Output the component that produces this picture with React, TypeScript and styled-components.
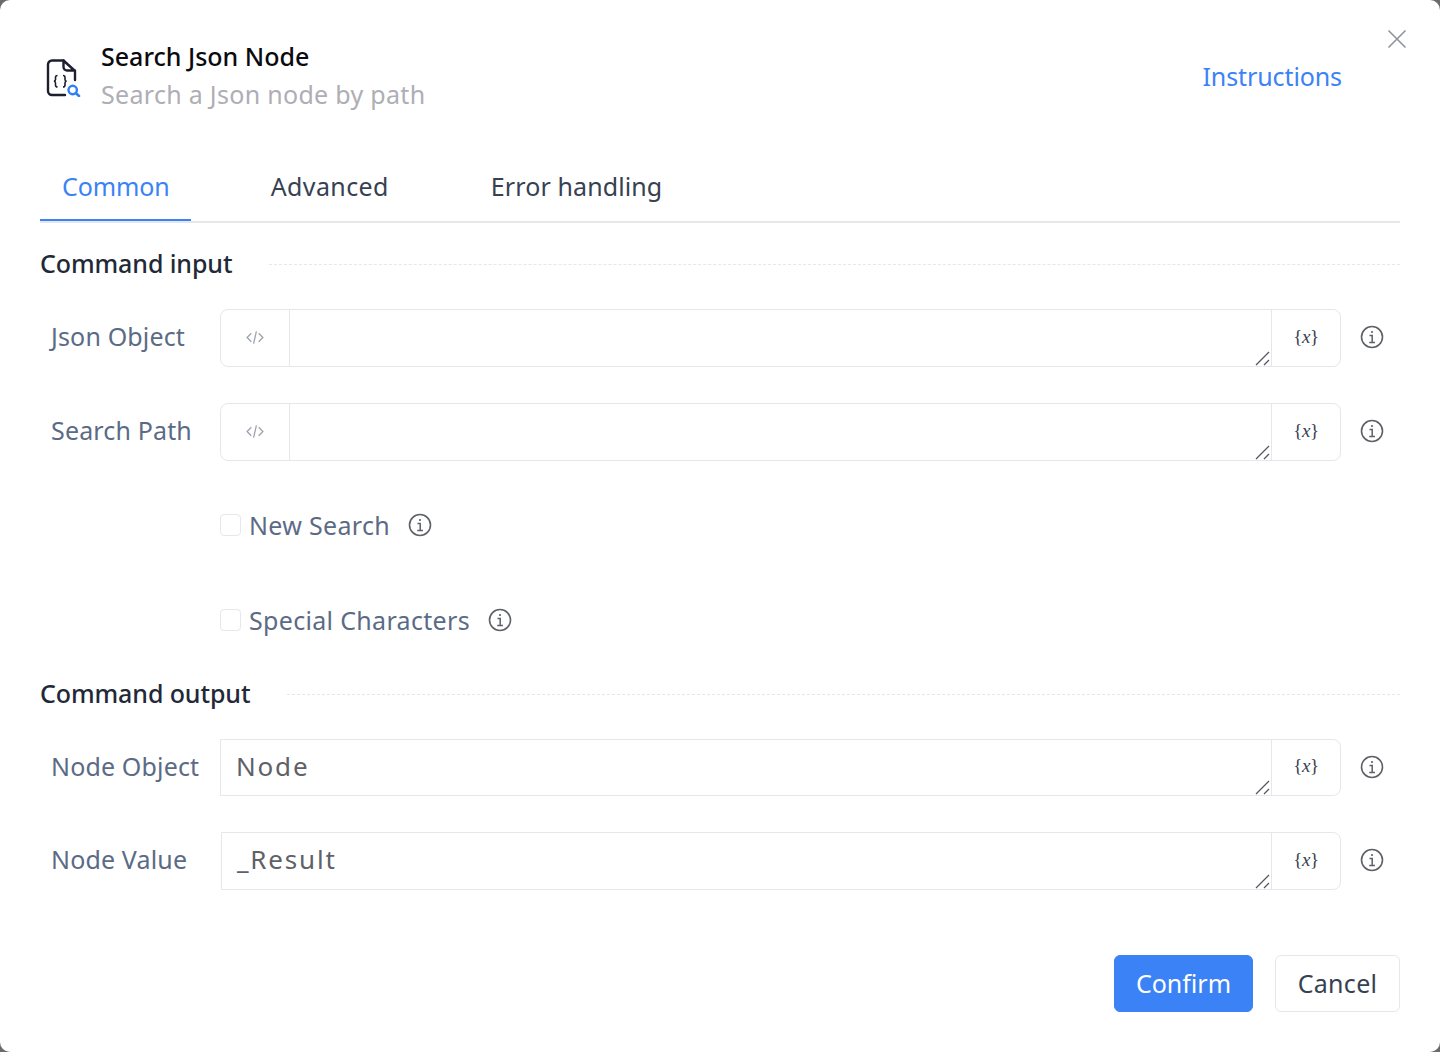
import styled, { createGlobalStyle } from "styled-components"

const Global = createGlobalStyle`
    html, body {
        margin:0;
        padding:0;
        background:#6b6b6b;
    }
    * {
        box-sizing:border-box;
    }
`
const Dialog = styled.div`
    position:relative;
    width:1440px;
    height:1052px;
    padding:0 40px;
    background:#fff;
    border-radius:10px;
    font-family:"Noto Sans", "Open Sans", sans-serif;
    overflow:hidden;
`
const Header = styled.div`
    height:153px;
    padding-top:37px;
    padding-left:6px;
    padding-right:58px;
    display:flex;
    align-items:flex-start;
    justify-content:space-between;
`
const TitleGroup = styled.div`
    display:flex;
    align-items:center;
    gap:19px;
`
const IconWrap = styled.div`
    display:flex;
    margin-top:8px;
`
const Titles = styled.div`
    display:flex;
    flex-direction:column;
    gap:2px;
`
const Title = styled.div`
    font-size:25px;
    line-height:38px;
    font-weight:500;
    color:#0b0b0f;
`
const Subtitle = styled.div`
    font-size:25px;
    line-height:34px;
    letter-spacing:0.3px;
    color:#aeaeb5;
`
const Instructions = styled.a`
    margin-top:20px;
    font-size:25px;
    line-height:38px;
    letter-spacing:-0.1px;
    color:#3b82f6;
`
const CloseBtn = styled.button`
    position:absolute;
    top:29px;
    right:33px;
    width:20px;
    height:20px;
    padding:0;
    border:none;
    background:none;
    color:#8f939c;
    display:flex;
`
const Tabs = styled.div`
    display:flex;
    gap:58px;
    height:70px;
    border-bottom:2px solid #e5e7eb;
`
const Tab = styled.div<{active?:boolean, spacing:number}>`
    padding:0 ${p=>p.active ? 21 : 22}px 0 22px;
    height:68px;
    margin-bottom:-1px;
    display:flex;
    align-items:center;
    font-size:25px;
    letter-spacing:${p=>p.spacing}px;
    color:${p=>p.active ? "#3b82f6" : "#374151"};
    border-bottom:2px solid ${p=>p.active ? "#3b82f6" : "transparent"};
`
const SectionHead = styled.div<{top:number}>`
    display:flex;
    align-items:center;
    gap:37px;
    height:40px;
    margin-top:${p=>p.top}px;
    font-size:25px;
    font-weight:500;
    letter-spacing:-0.1px;
    color:#1f2937;
    white-space:nowrap;
    &::after {
        content:"";
        flex:1;
        margin-top:2px;
        border-top:1px dashed #e5e7eb;
    }
`
const Row = styled.div<{top:number, h:number}>`
    display:flex;
    align-items:center;
    height:${p=>p.h}px;
    margin-top:${p=>p.top}px;
`
const Label = styled.label`
    width:180px;
    padding:0 0 4px 11px;
    font-size:25px;
    letter-spacing:0.15px;
    color:#5b6b85;
    white-space:nowrap;
`
const Field = styled.div<{bare?:boolean, shift?:number}>`
    position:relative;
    display:flex;
    width:${p=>1121 - (p.shift ?? 0)}px;
    margin-left:${p=>p.shift ?? 0}px;
    height:100%;
    border:1px solid #e5e7eb;
    border-radius:${p=>p.bare ? "0 8px 8px 0" : "8px"};
    overflow:hidden;
`
const CodeAddon = styled.div`
    width:69px;
    flex:none;
    display:flex;
    align-items:center;
    justify-content:center;
    padding:0 1px 2px 0;
    border-right:1px solid #e5e7eb;
    color:#9ca3af;
`
const Area = styled.textarea`
    flex:1;
    min-width:0;
    height:100%;
    padding:10px 15px;
    border:none;
    outline:none;
    resize:none;
    font-family:"Noto Sans", "Open Sans", sans-serif;
    font-size:26px;
    line-height:32px;
    letter-spacing:1.8px;
    color:#5f6168;
    background:#fff;
`
const Grip = styled.svg`
    position:absolute;
    right:69px;
    bottom:0;
    color:#55585f;
`
const VarAddon = styled.div`
    width:69px;
    flex:none;
    display:flex;
    align-items:center;
    justify-content:center;
    padding-bottom:3px;
    border-left:1px solid #e5e7eb;
    font-family:"Liberation Serif", serif;
    font-size:19px;
    letter-spacing:-0.4px;
    color:#374151;
`
const InfoSlot = styled.div`
    width:59px;
    flex:none;
    padding:0 0 2px 19px;
    display:flex;
    color:#5f6168;
`
const CheckRow = styled.div<{top:number}>`
    display:flex;
    align-items:center;
    height:38px;
    margin-top:${p=>p.top}px;
    margin-left:180px;
    gap:18px;
    color:#5f6168;
`
const CheckLabel = styled.label`
    display:flex;
    align-items:center;
    gap:8px;
    font-size:25px;
    letter-spacing:0.32px;
    color:#5b6b85;
`
const Box = styled.span`
    width:21px;
    height:22px;
    border:1px solid #e5e7eb;
    border-radius:4px;
    background:#fff;
`
const Footer = styled.div`
    display:flex;
    justify-content:flex-end;
    gap:22px;
    margin-top:65px;
`
const Button = styled.button<{primary?:boolean, w:number}>`
    width:${p=>p.w}px;
    height:57px;
    padding:0 0 2px;
    border-radius:6px;
    font-family:inherit;
    font-size:25px;
    letter-spacing:${p=>p.primary ? 0 : 0.3}px;
    border:1px solid ${p=>p.primary ? "#3b82f6" : "#e5e7eb"};
    background:${p=>p.primary ? "#3b82f6" : "#fff"};
    color:${p=>p.primary ? "#fff" : "#374151"};
`

const FileIcon = () => <svg width="36" height="38" viewBox="0 0 36 38" fill="none">
    <path d="M17.500 1.500H6a4 4 0 0 0-4 4V32a4 4 0 0 0 4 4H19" stroke="#1b1f2e" strokeWidth="2.400" strokeLinecap="round"/>
    <path d="M29 21V12L17.500 1.500V8a3.500 3.500 0 0 0 3.500 3.500H29" stroke="#1b1f2e" strokeWidth="2.400" strokeLinejoin="round" strokeLinecap="round"/>
    <path d="M11.500 16.500c-1.800 0-2 .8-2 2v2c0 1-.5 1.500-1.500 1.700 1 .2 1.500.7 1.500 1.700v2c0 1.200.2 2 2 2M17 16.500c1.800 0 2 .8 2 2v2c0 1 .5 1.500 1.500 1.700-1 .2-1.500.7-1.500 1.700v2c0 1.200-.2 2-2 2" stroke="#1b1f2e" strokeWidth="1.600"/>
    <circle cx="26.700" cy="31" r="4.200" stroke="#2f80f7" strokeWidth="2.400"/>
    <path d="M30 34.300l3 2.700" stroke="#2f80f7" strokeWidth="2.600" strokeLinecap="round"/>
</svg>

const CloseIcon = () => <svg width="20" height="20" viewBox="0 0 20 20" fill="none" stroke="currentColor" strokeWidth="1.600">
    <path d="M1.500 1.500l17 17M18.500 1.500l-17 17"/>
</svg>

const CodeIcon = () => <svg width="18" height="13" viewBox="0 0 19 14" fill="none" stroke="currentColor" strokeWidth="1.400">
    <path d="M5.500 2.500L1 7l4.500 4.500M13.500 2.500L18 7l-4.500 4.500M11 .5L8 13.500"/>
</svg>

const InfoIcon = () => <svg width="24" height="24" viewBox="0 0 24 24" fill="none" stroke="currentColor" strokeWidth="1.600">
    <circle cx="12" cy="12" r="10.500"/>
    <path d="M9.500 10.500H12.200V17.500M9.200 17.500H15" strokeWidth="1.500"/>
    <circle cx="12" cy="7" r="1.100" fill="currentColor" stroke="none"/>
</svg>

const InputRow = ({label, top, h, code, value, shift}:{label:string, top:number, h:number, code?:boolean, value?:string, shift?:number}) => <Row top={top} h={h}>
    <Label>{label}</Label>
    <Field bare={!code} shift={shift}>
        {code && <CodeAddon><CodeIcon/></CodeAddon>}
        <Area defaultValue={value} spellCheck={false}/>
        <Grip width="16" height="16" viewBox="0 0 16 16" fill="none" stroke="currentColor" strokeWidth="1.300">
            <path d="M1 15L14 2M9 15l5-5"/>
        </Grip>
        <VarAddon>{"{"}<i>x</i>{"}"}</VarAddon>
    </Field>
    <InfoSlot><InfoIcon/></InfoSlot>
</Row>

const App = () => {
    return <>
        <Global/>
        <Dialog>
            <Header>
                <TitleGroup>
                    <IconWrap><FileIcon/></IconWrap>
                    <Titles>
                        <Title>Search Json Node</Title>
                        <Subtitle>Search a Json node by path</Subtitle>
                    </Titles>
                </TitleGroup>
                <Instructions>Instructions</Instructions>
            </Header>
            <CloseBtn><CloseIcon/></CloseBtn>
            <Tabs>
                <Tab active spacing={-0.1}>Common</Tab>
                <Tab spacing={0.4}>Advanced</Tab>
                <Tab spacing={0.1}>Error handling</Tab>
            </Tabs>
            <SectionHead top={20}>Command input</SectionHead>
            <InputRow label="Json Object" top={26} h={58} code/>
            <InputRow label="Search Path" top={36} h={58} code/>
            <CheckRow top={45}>
                <CheckLabel><Box/>New Search</CheckLabel>
                <InfoIcon/>
            </CheckRow>
            <CheckRow top={57}>
                <CheckLabel><Box/>Special Characters</CheckLabel>
                <InfoIcon/>
            </CheckRow>
            <SectionHead top={34}>Command output</SectionHead>
            <InputRow label="Node Object" top={26} h={57} value="Node"/>
            <InputRow label="Node Value" top={36} h={58} value="_Result" shift={1}/>
            <Footer>
                <Button primary w={139}>Confirm</Button>
                <Button w={125}>Cancel</Button>
            </Footer>
        </Dialog>
    </>
}

export default App;
